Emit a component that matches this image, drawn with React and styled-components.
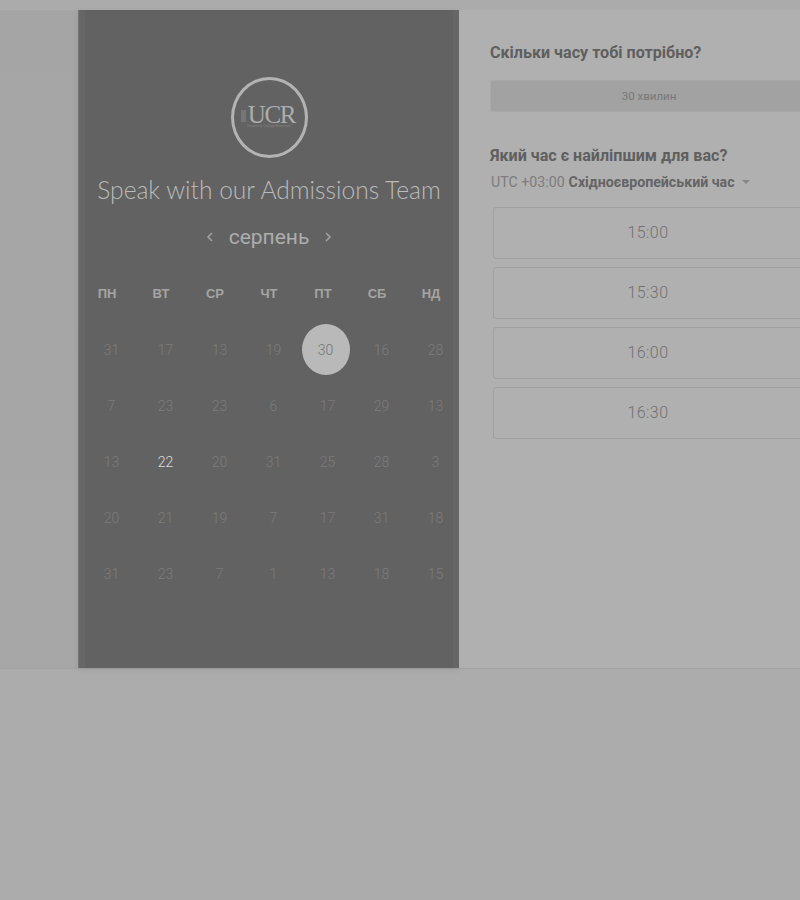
import React from 'react'
import styled, { createGlobalStyle } from 'styled-components'

const GlobalStyle = createGlobalStyle`
  html, body {
    margin: 0;
    padding: 0;
    height: 900px;
    overflow: hidden;
    background: #acacac;
    font-family: "Liberation Sans", Arial, sans-serif;
  }
`

const Page = styled.div`
  width: 800px;
  height: 900px;
  overflow: hidden;
  background: #acacac;
`

const TopStrip = styled.div`
  height: 10px;
  background: #ababab;
`

const Main = styled.div`
  display: flex;
  height: 658px;
  padding-left: 78px;
  background: linear-gradient(#a5a5a5, #a7a7a7);
  border-bottom: 1px solid #a2a2a2;
  box-sizing: content-box;
`

const SidePanel = styled.section`
  flex: 0 0 381px;
  box-sizing: border-box;
  display: flex;
  flex-direction: column;
  align-items: center;
  padding-top: 67px;
  background: #626262;
  border-left: 1px solid #757575;
  box-shadow: inset 6px 0 0 #666666, inset -6px 0 0 #666666, 0 2px 6px rgba(0, 0, 0, 0.08);
  overflow: hidden;
`

const LogoRing = styled.div`
  width: 77px;
  height: 81px;
  box-sizing: border-box;
  padding-bottom: 4px;
  border: 3px solid #b3b3b3;
  border-radius: 50%;
  display: flex;
  flex-direction: column;
  align-items: center;
  justify-content: center;
`

const LogoName = styled.div`
  display: flex;
  align-items: center;
  gap: 2px;
  margin-left: -2px;
  font-family: "Liberation Serif", serif;
  font-size: 25px;
  line-height: 22px;
  letter-spacing: -1.3px;
  color: #adadad;
`

const LogoTag = styled.div`
  margin-top: -2px;
  font-size: 3px;
  line-height: 4px;
  letter-spacing: 0.2px;
  color: #8a8a8a;
  white-space: nowrap;
`

const Title = styled.h1`
  margin: 17px 0 0;
  font-family: Lato, sans-serif;
  font-weight: 300;
  font-size: 24.6px;
  line-height: 30px;
  color: #bababa;
  white-space: nowrap;
`

const MonthRow = styled.div`
  display: flex;
  align-items: center;
  gap: 14px;
  margin-top: 19px;
  color: #adadad;
`

const MonthName = styled.span`
  font-family: Roboto, sans-serif;
  font-size: 21px;
  line-height: 26px;
`

const Arrow = styled.svg`
  width: 10px;
  height: 12px;
  fill: none;
  stroke: #a0a0a0;
  stroke-width: 1.6;
`

const WeekRow = styled.div`
  display: grid;
  grid-template-columns: repeat(7, 54px);
  width: 378px;
  margin: 36px 0 0 5px;
  padding-right: 5px;
`

const WeekDay = styled.div`
  text-align: center;
  font-size: 13px;
  line-height: 16px;
  font-weight: 700;
  color: #a4a4a4;
`

const DayGrid = styled.div`
  display: grid;
  grid-template-columns: repeat(7, 54px);
  grid-auto-rows: 55.9px;
  width: 378px;
  margin: 20px 0 0 9px;
`

const Day = styled.div`
  display: flex;
  align-items: center;
  justify-content: center;
  position: relative;
  font-family: Roboto, sans-serif;
  font-size: 14px;
  font-weight: 300;
  color: ${p => (p.$today ? '#dcdcdc' : '#7c7c7c')};
`

const SelectedDay = styled.div`
  position: absolute;
  left: 1px;
  top: 2px;
  width: 48px;
  height: 51px;
  border-radius: 50%;
  background: #b9b9b9;
  color: #747474;
  display: flex;
  align-items: center;
  justify-content: center;
`

const RightPanel = styled.section`
  flex: 0 0 360px;
  box-sizing: border-box;
  padding: 33px 0 0 31px;
  background: #b0b0b0;
`

const Heading = styled.h2`
  margin: 0;
  font-family: Roboto, sans-serif;
  font-size: 16.1px;
  line-height: 20px;
  font-weight: 700;
  color: #5f5f5f;
`

const Duration = styled.div`
  width: 318px;
  height: 32px;
  margin-top: 17px;
  box-sizing: border-box;
  border: 1px solid #a9a9a9;
  border-radius: 3px;
  background: #a2a2a2;
  color: #777777;
  font-family: Roboto, sans-serif;
  font-size: 11.5px;
  display: flex;
  align-items: center;
  justify-content: center;
`

const SecondHeading = styled(Heading)`
  margin-top: 34px;
`

const Zone = styled.div`
  display: flex;
  align-items: center;
  gap: 4px;
  margin: 7px 0 0 1px;
  font-family: Roboto, sans-serif;
  font-size: 14.2px;
  line-height: 18px;
  color: #7c7c7c;

  b {
    color: #646464;
  }
`

const Caret = styled.span`
  width: 0;
  height: 0;
  margin-left: 3px;
  border-left: 4px solid transparent;
  border-right: 4px solid transparent;
  border-top: 4px solid #868686;
`

const Slots = styled.div`
  display: flex;
  flex-direction: column;
  gap: 8px;
  margin: 16px 0 0 3px;
`

const Slot = styled.div`
  width: 310px;
  height: 52px;
  box-sizing: border-box;
  padding-bottom: 2px;
  border: 1px solid #a0a0a0;
  border-radius: 3px;
  display: flex;
  align-items: center;
  justify-content: center;
  font-family: Roboto, sans-serif;
  font-weight: 300;
  font-size: 16px;
  letter-spacing: 0.4px;
  color: #707070;
`

const weekDays = ['ПН', 'ВТ', 'СР', 'ЧТ', 'ПТ', 'СБ', 'НД']
const days = [
  31, 17, 13, 19, 30, 16, 28,
  7, 23, 23, 6, 17, 29, 13,
  13, 22, 20, 31, 25, 28, 3,
  20, 21, 19, 7, 17, 31, 18,
  31, 23, 7, 1, 13, 18, 15,
]
const slots = ['15:00', '15:30', '16:00', '16:30']

export default function App () {
  return (
    <Page>
      <GlobalStyle />
      <TopStrip />
      <Main>
        <SidePanel>
          <LogoRing>
            <LogoName>
              <svg width="5" height="14" viewBox="0 0 5 14">
                <rect x="0" y="2" width="5" height="12" fill="#767676" />
              </svg>
              UCR
            </LogoName>
            <LogoTag>University College Roosevelt</LogoTag>
          </LogoRing>
          <Title>Speak with our Admissions Team</Title>
          <MonthRow>
            <Arrow viewBox="0 0 10 12"><path d="M7 2 3 6l4 4" /></Arrow>
            <MonthName>серпень</MonthName>
            <Arrow viewBox="0 0 10 12"><path d="m3 2 4 4-4 4" /></Arrow>
          </MonthRow>
          <WeekRow>
            {weekDays.map(d => <WeekDay key={d}>{d}</WeekDay>)}
          </WeekRow>
          <DayGrid>
            {days.map((d, i) => (
              <Day key={i} $today={i === 15}>
                {i === 4 ? <SelectedDay>{d}</SelectedDay> : d}
              </Day>
            ))}
          </DayGrid>
        </SidePanel>
        <RightPanel>
          <Heading>Скільки часу тобі потрібно?</Heading>
          <Duration>30 хвилин</Duration>
          <SecondHeading>Який час є найліпшим для вас?</SecondHeading>
          <Zone>
            UTC +03:00 <b>Східноєвропейський час</b>
            <Caret />
          </Zone>
          <Slots>
            {slots.map(s => <Slot key={s}>{s}</Slot>)}
          </Slots>
        </RightPanel>
      </Main>
    </Page>
  )
}
